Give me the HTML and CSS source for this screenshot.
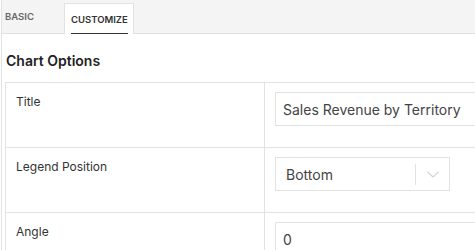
FILE: index.html
```html
<!DOCTYPE html>
<html>
<head>
<meta charset="utf-8">
<link rel="stylesheet" href="styles.css">
</head>
<body>
<div class="panel">
  <div class="tabs">
    <div class="tab">BASIC</div>
    <div class="tab active"><span class="tab-label">CUSTOMIZE</span></div>
  </div>
  <div class="content">
    <h2 class="section-title">Chart Options</h2>
    <div class="table">
      <div class="row">
        <div class="label">Title</div>
        <div class="field"><div class="input wide">Sales Revenue by Territory</div></div>
      </div>
      <div class="row">
        <div class="label">Legend Position</div>
        <div class="field">
          <div class="select">
            <span class="select-value">Bottom</span>
            <span class="select-sep"></span>
            <span class="select-arrow">
              <svg width="12" height="7" viewBox="0 0 12 7"><path d="M0.5 0.8 L6 6 L11.5 0.8" fill="none" stroke="#d0d0d0" stroke-width="1.1"/></svg>
            </span>
          </div>
        </div>
      </div>
      <div class="row">
        <div class="label">Angle</div>
        <div class="field"><div class="input wide">0</div></div>
      </div>
    </div>
  </div>
</div>
</body>
</html>
```
FILE: styles.css
```css
html, body {
  margin: 0;
  padding: 0;
  background: #ffffff;
  font-family: Inter, "Noto Sans", sans-serif;
  overflow: hidden;
}
.panel {
  width: 520px;
  border-left: 1px solid #e2e2e2;
  margin-left: 1px;
}
.tabs {
  display: flex;
  background: #f4f4f4;
  padding-top: 3px;
  height: 30px;
  border-bottom: 1px solid #e2e2e2;
}
.tab {
  font-size: 9.5px;
  font-weight: 600;
  color: #666;
  padding: 0 0 0 3px;
  width: 59px;
  display: flex;
  align-items: center;
  margin-top: -3px;
}
.tab.active {
  background: #fff;
  color: #333;
  border: 1px solid #e2e2e2;
  border-bottom: none;
  width: auto;
  padding: 0 5px 0 6px;
  margin-top: 0;
  margin-bottom: -1px;
  align-items: stretch;
}
.tab-label {
  display: flex;
  align-items: center;
  border-bottom: 1.5px solid #333;
  padding-top: 1px;
}
.content {
  padding: 0 0 0 3px;
}
.section-title {
  margin: 0;
  font-size: 14px;
  font-weight: 600;
  color: #222;
  padding: 18px 0 13px 1px;
  line-height: 17px;
}
.table {
  border-top: 1px solid #e2e2e2;
  border-left: 1px solid #e2e2e2;
}
.row {
  display: grid;
  grid-template-columns: 259px 1fr;
  border-bottom: 1px solid #e2e2e2;
  height: 64px;
}
.label {
  font-size: 12px;
  color: #333;
  padding: 11px 10px;
  line-height: 15px;
  border-right: 1px solid #e2e2e2;
}
.field {
  padding: 9px 10px;
}
.input {
  height: 34px;
  box-sizing: border-box;
  border: 1px solid #e2e2e2;
  font-size: 14px;
  color: #444;
  display: flex;
  align-items: center;
  padding: 0 7px;
}
.input.wide {
  width: 240px;
}
.select {
  width: 175px;
  height: 34px;
  box-sizing: border-box;
  border: 1px solid #e2e2e2;
  display: flex;
  align-items: center;
  font-size: 14px;
  color: #444;
  padding-left: 10px;
}
.select-value {
  flex: 1;
}
.select-sep {
  width: 1px;
  height: 21px;
  background: #e2e2e2;
}
.select-arrow {
  width: 33px;
  display: flex;
  justify-content: center;
  align-items: center;
}
```
